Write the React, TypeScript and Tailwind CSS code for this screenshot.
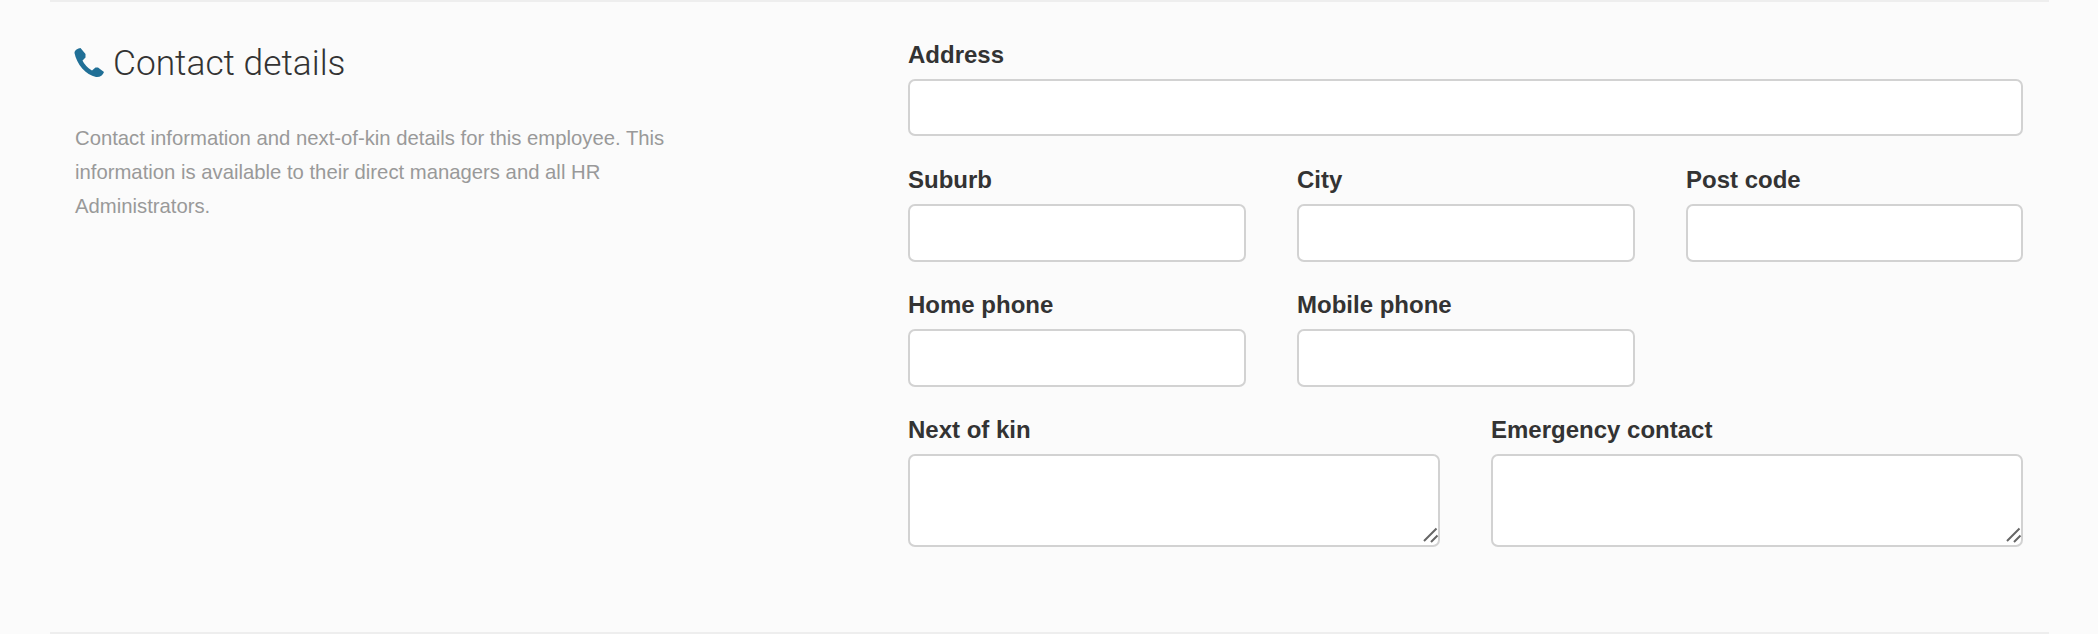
const font = "font-['Liberation_Sans',Arial,sans-serif]";

function Field({ label, area, short }: { label: string; area?: boolean; short?: boolean }) {
  return (
    <div className="flex flex-col">
      <label className="h-[34px] mb-[7px] text-[24px] leading-[34px] font-bold text-[#333]">{label}</label>
      {area ? (
        <div className="relative">
          <textarea className="block w-full h-[93px] bg-white border-2 border-[#d2d2d2] rounded-[7px] resize-none" />
          <svg viewBox="0 0 20 20" className="absolute right-0 bottom-0 w-[20px] h-[20px]" stroke="#666" strokeWidth="2" fill="none">
            <path d="M4 14 16.5 1.5M11 15 17.5 8.5" />
          </svg>
        </div>
      ) : (
        <input
          type="text"
          className={short ? "block w-full h-[57px] mb-[1px] bg-white border-2 border-[#d2d2d2] rounded-[7px]" : "block w-full h-[58px] bg-white border-2 border-[#d2d2d2] rounded-[7px]"}
        />
      )}
    </div>
  );
}

export default function App() {
  return (
    <div className={`h-[634px] bg-[#fbfbfb] px-[50px] overflow-hidden ${font}`}>
      <section className="w-[1999px] h-[634px] border-y-2 border-[#eeeeee] flex pl-[25px] pr-[26px]">
        <div className="w-[833px] pt-[41px] shrink-0">
          <h2 className="flex items-center h-[40px] font-['Roboto',sans-serif] font-light text-[35.3px] leading-[40px] text-[#333]">
            <svg viewBox="0 0 30 30" className="w-[30px] h-[30px] -ml-[1px] mr-[9px] shrink-0" fill="#206f96">
              <path d="M.5 5C.5 2 4 .3 6.5 0L11.5 6V9.5L8.5 12.5C10 16 14 20 18 22.5L21.5 19.5H24L30 24C29 27.5 25.5 29.5 22 29C12 27 2.5 16 .5 5Z" />
            </svg>
            Contact details
          </h2>
          <p className="mt-[38px] w-[600px] text-[20.3px] leading-[34px] text-[#999]">
            Contact information and next-of-kin details for this employee. This information is available to their direct managers and all HR Administrators.
          </p>
        </div>
        <div className="flex-1 pt-[36px] flex flex-col gap-[26px]">
          <Field label="Address" short />
          <div className="grid grid-cols-[338px_338px_337px] gap-x-[51px]">
            <Field label="Suburb" />
            <Field label="City" />
            <Field label="Post code" />
          </div>
          <div className="grid grid-cols-[338px_338px_337px] gap-x-[51px]">
            <Field label="Home phone" />
            <Field label="Mobile phone" />
          </div>
          <div className="grid grid-cols-[532px_532px] gap-x-[51px]">
            <Field label="Next of kin" area />
            <Field label="Emergency contact" area />
          </div>
        </div>
      </section>
    </div>
  );
}
